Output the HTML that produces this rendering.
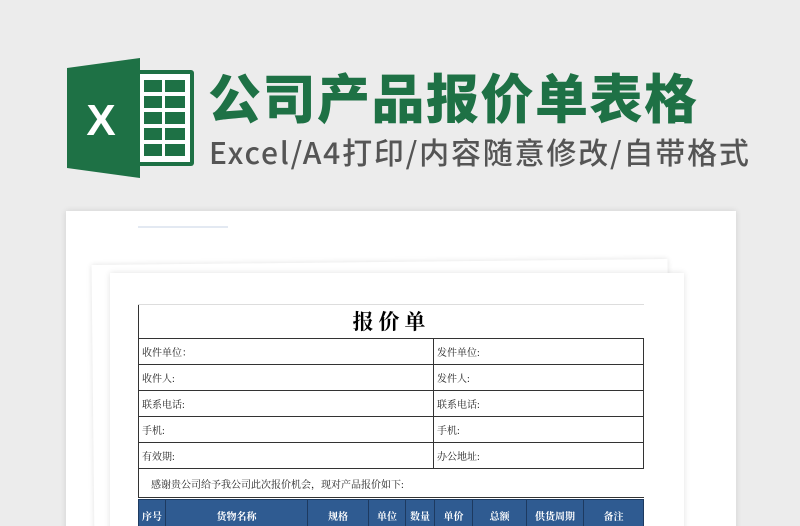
<!DOCTYPE html>
<html><head><meta charset="utf-8"><style>
html,body{margin:0;width:800px;height:526px;overflow:hidden}
body{background:#ececec;position:relative;font-family:"Liberation Sans","Noto Sans CJK SC",sans-serif}
.abs{position:absolute}
.t1{left:208px;top:67px;font-size:53px;font-weight:900;color:#1e7145;letter-spacing:1.5px;white-space:nowrap;line-height:68px}
.t2{left:209px;top:133px;font-size:30px;font-weight:500;color:#555;white-space:nowrap;line-height:36px;font-family:"Noto Sans CJK SC",sans-serif;letter-spacing:1.8px}
.paper{background:#fff;box-shadow:0 0 6px rgba(0,0,0,.12)}
table{border-collapse:collapse;font-family:"Liberation Serif","Noto Serif CJK SC",serif;font-size:10px;color:#222}
td{border:1.5px solid #333;height:25px;padding:0 0 0 3px}
.hd td{background:#2f5b91;color:#fff;text-align:center;font-weight:bold;border:1px solid #1d3a60;height:30px;padding:0}
</style></head><body>
<svg class="abs" style="left:64px;top:56px" width="132" height="124" viewBox="0 0 132 124">
<rect x="72" y="14" width="58" height="96" rx="3" fill="#1e7145"/>
<rect x="76" y="18" width="50" height="88" fill="#fff"/>
<g fill="#1e7145">
<rect x="80" y="24" width="18" height="12"/><rect x="101" y="24" width="20" height="12"/>
<rect x="80" y="40" width="18" height="12"/><rect x="101" y="40" width="20" height="12"/>
<rect x="80" y="56" width="18" height="12"/><rect x="101" y="56" width="20" height="12"/>
<rect x="80" y="72" width="18" height="12"/><rect x="101" y="72" width="20" height="12"/>
<rect x="80" y="88" width="18" height="12"/><rect x="101" y="88" width="20" height="12"/>
</g>
<path d="M3 12 L76 2 L76 122 L3 112 Z" fill="#1e7145"/>
<text x="37" y="79" font-family="Liberation Sans" font-weight="bold" font-size="44" fill="#fff" text-anchor="middle">X</text>
</svg>
<div class="abs t1">公司产品报价单表格</div>
<div class="abs t2">Excel/A4打印/内容随意修改/自带格式</div>
<div class="abs paper" style="left:66px;top:211px;width:670px;height:330px"></div>
<div class="abs" style="left:138px;top:226px;width:90px;height:2px;background:#e3e9f2"></div>
<div class="abs paper" style="left:93px;top:262px;width:576px;height:280px;transform:rotate(-0.6deg)"></div>
<div class="abs paper" style="left:110px;top:273px;width:574px;height:270px"></div>
<div class="abs" style="left:138px;top:304px;width:506px;height:1px;background:#ddd"></div>
<div class="abs" style="left:138px;top:305px;width:506px;height:33px;border-left:1px solid #333;font-family:'Noto Serif CJK SC',serif;font-weight:bold;font-size:21px;text-align:center;line-height:33px;letter-spacing:5px;box-sizing:border-box">报价单</div>
<table class="abs" style="left:138px;top:338px;width:506px">
<tr><td style="width:291px">收件单位：</td><td>发件单位:</td></tr>
<tr><td>收件人:</td><td>发件人:</td></tr>
<tr><td>联系电话:</td><td>联系电话:</td></tr>
<tr><td>手机:</td><td>手机:</td></tr>
<tr><td>有效期:</td><td>办公地址:</td></tr>
<tr><td colspan="2" style="height:28px;padding-left:12px;border-right:none">感谢贵公司给予我公司此次报价机会，现对产品报价如下:</td></tr>
</table>
<table class="abs" style="left:138px;top:499px;width:506px">
<tr class="hd"><td style="width:26px">序号</td><td style="width:141px">货物名称</td><td style="width:60px">规格</td><td style="width:36px">单位</td><td style="width:28px">数量</td><td style="width:37px">单价</td><td style="width:53px">总额</td><td style="width:56px">供货周期</td><td>备注</td></tr>
</table>
</body></html>
